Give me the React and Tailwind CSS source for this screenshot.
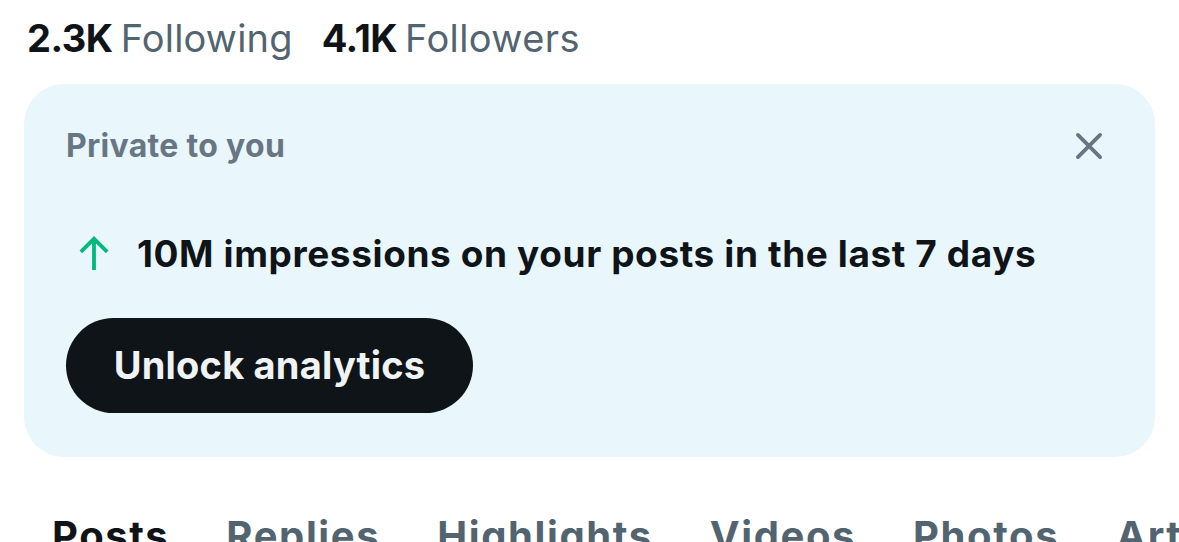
export default function App() {
  const tabs = ["Posts", "Replies", "Highlights", "Videos", "Photos", "Articles"];
  return (
    <div
      className="w-[1179px] h-[542px] overflow-hidden bg-white"
      style={{ fontFamily: "Inter, 'Noto Sans', sans-serif" }}
    >
      {/* stats */}
      <div className="flex items-baseline gap-[29px] pl-[27px] pt-[14px] h-[84px] text-[38px] leading-[48px]">
        <div>
          <span className="font-bold text-[#0f1419] tracking-[-0.5px]">2.3K</span>
          <span className="ml-[8px] text-[#536471] tracking-[0.2px]">Following</span>
        </div>
        <div>
          <span className="font-bold text-[#0f1419] tracking-[-0.5px]">4.1K</span>
          <span className="ml-[8px] text-[#536471] tracking-[0.4px]">Followers</span>
        </div>
      </div>

      {/* private card */}
      <div className="mx-[24px] h-[373px] rounded-[40px] bg-[#e9f7fd] pl-[42px] pr-[47px] pt-[36px]">
        <div className="flex items-center justify-between h-[52px]">
          <span className="text-[32px] font-bold text-[#687684] tracking-[0.3px]">Private to you</span>
          <svg width="38" height="38" viewBox="0 0 24 24">
            <path d="M5 5L19 19M19 5L5 19" stroke="#687684" strokeWidth="2.4" strokeLinecap="round" />
          </svg>
        </div>
        <div className="flex items-center gap-[25px] mt-[57px] h-[50px] pl-[10px]">
          <svg width="36" height="38" viewBox="0 0 24 26">
            <path d="M12 24V3M3 11.5L12 2.5L21 11.5" stroke="#00ba7c" strokeWidth="2.6" fill="none" />
          </svg>
          <span className="text-[37px] font-bold text-[#0f1419] tracking-[0.6px]">
            10M impressions on your posts in the last 7 days
          </span>
        </div>
        <button className="mt-[39px] h-[95px] w-[407px] rounded-full bg-[#0f1419] text-[#eff3f4] text-[38px] font-bold tracking-[0.2px]">
          Unlock analytics
        </button>
      </div>

      {/* tabs */}
      <div className="flex gap-[57px] pl-[52px] pt-[49px] text-[40px] font-bold whitespace-nowrap tracking-[1.6px]">
        {tabs.map((t, i) => (
          <span key={t} className={i === 0 ? "text-[#0f1419]" : "text-[#536471]"}>
            {t}
          </span>
        ))}
      </div>
    </div>
  );
}
